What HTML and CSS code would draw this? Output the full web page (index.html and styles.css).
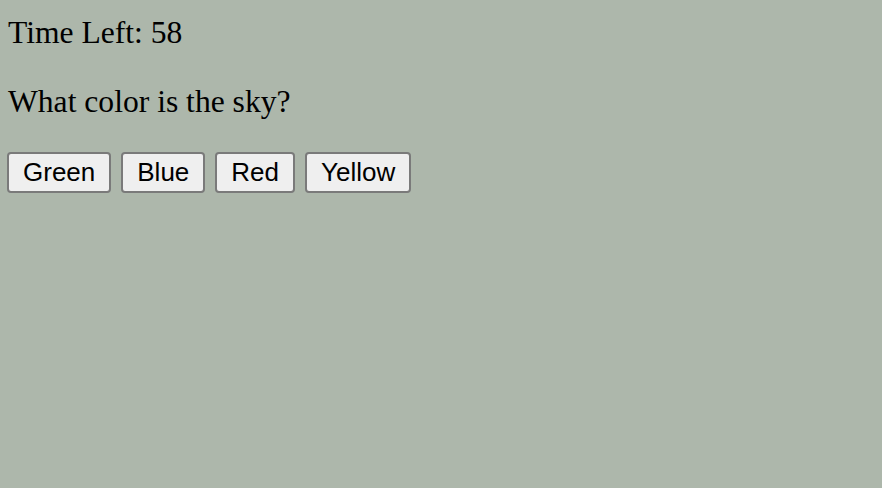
FILE: index.html
```html
<!DOCTYPE html>
<html>
<head>
<meta charset="utf-8">
<link rel="stylesheet" href="styles.css">
</head>
<body>
<p class="timer">Time Left: 58</p>
<p class="question">What color is the sky?</p>
<div class="answers">
  <button class="answer">Green</button>
  <button class="answer">Blue</button>
  <button class="answer">Red</button>
  <button class="answer">Yellow</button>
</div>
</body>
</html>
```
FILE: styles.css
```css
html, body {
  background: #adb7ab;
}
body {
  margin: 0;
  padding: 14px 7px 0 7px;
  font-family: "Liberation Serif", "Times New Roman", serif;
  font-size: 31.6px;
  color: #000;
}
p {
  margin: 0 0 32px 0;
  line-height: 37px;
}
.timer {
  padding-left: 1px;
}
.question {
  padding-left: 1px;
}
.answers {
  display: flex;
  gap: 10px;
  margin-top: 31px;
}
.answer {
  font-family: "Liberation Sans", Arial, sans-serif;
  font-size: 26px;
  line-height: 31px;
  padding: 3px 14px 3px 14px;
  border: 2px solid #7a7a7a;
  border-radius: 4px;
  background: #efefef;
  color: #000;
  margin: 0;
  height: 41px;
}
```
